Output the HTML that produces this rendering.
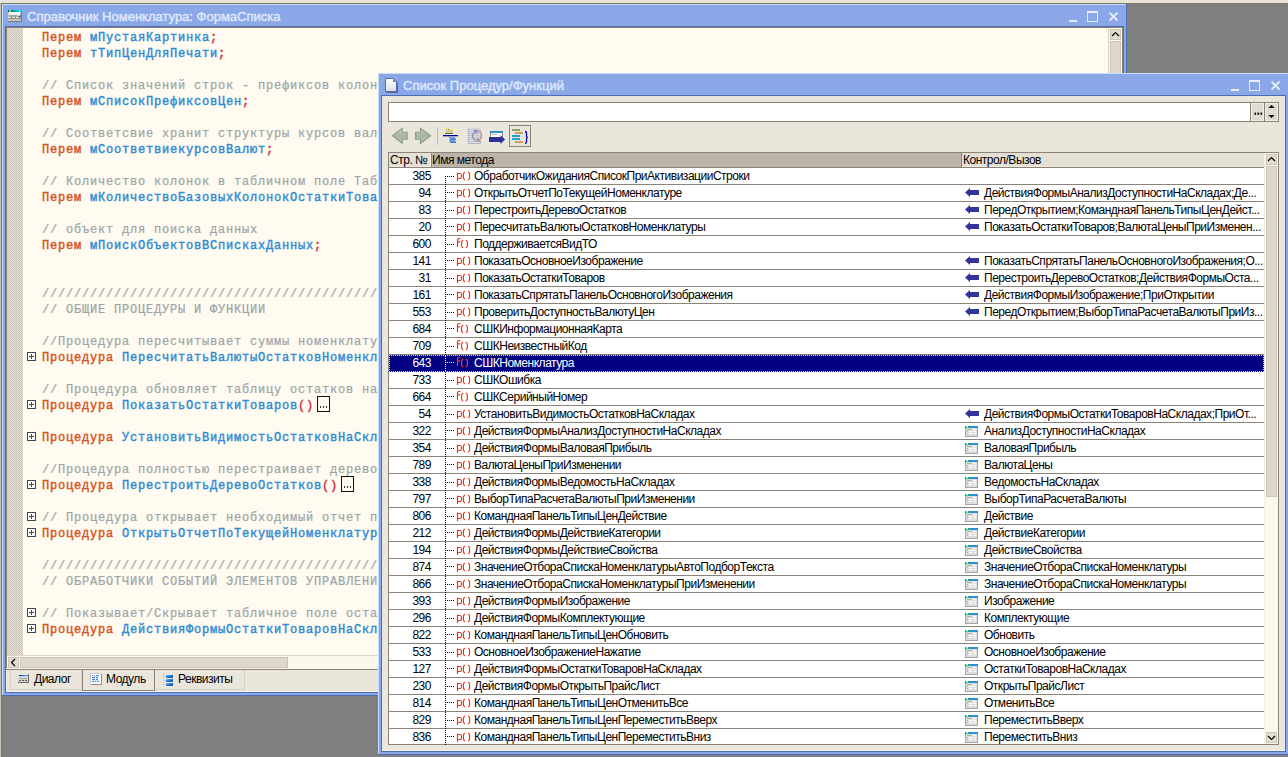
<!DOCTYPE html><html><head><meta charset="utf-8"><style>
*{margin:0;padding:0;box-sizing:border-box}
body{width:1288px;height:757px;background:#808080;position:relative;overflow:hidden;font-family:"Liberation Sans",sans-serif}
.a{position:absolute}
.t{position:absolute;white-space:pre;font-family:"Liberation Sans",sans-serif;font-size:12px;letter-spacing:-0.48px;line-height:14px;color:#000}
.c{position:absolute;white-space:pre;font-family:"Liberation Mono",monospace;font-weight:normal;-webkit-text-stroke:0.4px;font-size:12px;letter-spacing:0.8px;line-height:16px}
.kw{color:#d8501a}.id{color:#2a8ad6}.cm{color:#9aa4a8;-webkit-text-stroke:0.2px}.pu{color:#e02838}
.ttl{position:absolute;white-space:pre;font-family:"Liberation Sans",sans-serif;font-weight:normal;font-size:13px;-webkit-text-stroke:0.45px;line-height:15px;color:#dfe7fa}
</style></head><body>
<div class="a" style="left:0px;top:0px;width:1288px;height:3px;background:#e8e4d8"></div>
<div class="a" style="left:0px;top:3px;width:1288px;height:1px;background:#7c7868"></div>
<div class="a" style="left:0px;top:3px;width:1px;height:754px;background:#c8c4b4"></div>
<div class="a" style="left:1px;top:3px;width:1px;height:754px;background:#7c7868"></div>
<div class="a" style="left:2px;top:4px;width:1125px;height:692px;background:#8aa8e8"></div>
<div class="a" style="left:2px;top:4px;width:1125px;height:1px;background:#c6dcfc"></div>
<div class="a" style="left:2px;top:4px;width:1px;height:692px;background:#c6dcfc"></div>
<div class="a" style="left:1126px;top:4px;width:1px;height:692px;background:#4c6cb8"></div>
<div class="a" style="left:2px;top:695px;width:1125px;height:1px;background:#4c6cb8"></div>
<svg class="a" style="left:8px;top:10px" width="14" height="12" viewBox="0 0 14 12">
<defs><linearGradient id="tg" x1="0" y1="0" x2="1" y2="0"><stop offset="0" stop-color="#005868"/><stop offset="1" stop-color="#00ffff"/></linearGradient></defs>
<rect x="0" y="0" width="14" height="2" fill="url(#tg)"/><rect x="1" y="0.2" width="1.6" height="1.6" fill="#ffff00"/>
<rect x="0" y="2" width="13" height="9" fill="#c8c8c8"/><rect x="1" y="2" width="11" height="3" fill="#f6f6f6"/>
<rect x="1" y="5" width="8" height="2" fill="#a4a4a4"/><rect x="10" y="6" width="3" height="1" fill="#707070"/><rect x="12" y="5" width="1" height="1" fill="#707070"/>
<rect x="0" y="7" width="3" height="1" fill="#f0f0f0"/><rect x="4" y="7" width="3" height="1" fill="#f0f0f0"/><rect x="8" y="7" width="3" height="1" fill="#f0f0f0"/>
<rect x="3" y="7" width="1" height="2" fill="#707070"/><rect x="7" y="7" width="1" height="2" fill="#707070"/><rect x="11" y="7" width="1" height="2" fill="#707070"/><rect x="0" y="8" width="13" height="1" fill="#888"/>
<rect x="0" y="11" width="14" height="1" fill="#7a7a7a"/><rect x="13" y="1" width="1" height="11" fill="#7a7a7a"/></svg>
<div class="ttl" style="left:27px;top:9px">Справочник Номенклатура: ФормаСписка</div>
<svg class="a" style="left:1109px;top:12px" width="10" height="10" viewBox="0 0 10 10"><path d="M0.6 0.6L8.5 8.5M8.5 0.6L0.6 8.5" stroke="#e6edfc" stroke-width="1.9" stroke-linecap="butt"/></svg>
<div class="a" style="left:1087px;top:11px;width:11px;height:11px;border:1px solid #e6edfc;border-top-width:2px"></div>
<div class="a" style="left:1069px;top:20px;width:8px;height:2px;background:#e6edfc"></div>
<div class="a" style="left:5px;top:26px;width:1119px;height:667px;border:1px solid #4c6cb8"></div>
<div class="a" style="left:6px;top:27px;width:1117px;height:665px;background:#ebe6dc"></div>
<div class="a" style="left:6px;top:27px;width:1116px;height:1px;background:#8a8270"></div>
<div class="a" style="left:6px;top:27px;width:1px;height:642px;background:#8a8270"></div>
<div class="a" style="left:1122px;top:27px;width:1px;height:642px;background:#8a8270"></div>
<div class="a" style="left:7px;top:28px;width:16px;height:627px;background-color:#e6e0d6;background-image:linear-gradient(45deg,#cbc5b8 25%,transparent 25%,transparent 75%,#cbc5b8 75%),linear-gradient(45deg,#cbc5b8 25%,transparent 25%,transparent 75%,#cbc5b8 75%);background-size:2px 2px;background-position:0 0,1px 1px"></div>
<div class="a" style="left:23px;top:28px;width:1085px;height:627px;background:#fffbf0"></div>
<div class="c" style="left:42px;top:30px"><span class="kw">Перем</span> <span class="id">мПустаяКартинка</span><span class="pu">;</span></div>
<div class="c" style="left:42px;top:46px"><span class="kw">Перем</span> <span class="id">тТипЦенДляПечати</span><span class="pu">;</span></div>
<div class="c" style="left:42px;top:78px"><span class="cm">// Список значений строк - префиксов колонок</span></div>
<div class="c" style="left:42px;top:94px"><span class="kw">Перем</span> <span class="id">мСписокПрефиксовЦен</span><span class="pu">;</span></div>
<div class="c" style="left:42px;top:126px"><span class="cm">// Соответсвие хранит структуры курсов валют</span></div>
<div class="c" style="left:42px;top:142px"><span class="kw">Перем</span> <span class="id">мСоответвиекурсовВалют</span><span class="pu">;</span></div>
<div class="c" style="left:42px;top:174px"><span class="cm">// Количество колонок в табличном поле Таблица</span></div>
<div class="c" style="left:42px;top:190px"><span class="kw">Перем</span> <span class="id">мКоличествоБазовыхКолонокОстаткиТоваров</span><span class="pu">;</span></div>
<div class="c" style="left:42px;top:222px"><span class="cm">// объект для поиска данных</span></div>
<div class="c" style="left:42px;top:238px"><span class="kw">Перем</span> <span class="id">мПоискОбъектовВСпискахДанных</span><span class="pu">;</span></div>
<div class="c" style="left:42px;top:286px"><span class="cm">////////////////////////////////////////////////////////////</span></div>
<div class="c" style="left:42px;top:302px"><span class="cm">// ОБЩИЕ ПРОЦЕДУРЫ И ФУНКЦИИ</span></div>
<div class="c" style="left:42px;top:334px"><span class="cm">//Процедура пересчитывает суммы номенклатуры</span></div>
<svg class="a" style="left:27px;top:352px" width="9" height="9" viewBox="0 0 9 9"><rect x="0.5" y="0.5" width="8" height="8" fill="#fff" stroke="#404850"/><path d="M2 4.5H7M4.5 2V7" stroke="#404850"/></svg>
<div class="c" style="left:42px;top:350px"><span class="kw">Процедура</span> <span class="id">ПересчитатьВалютыОстатковНоменклатуры</span></div>
<div class="c" style="left:42px;top:382px"><span class="cm">// Процедура обновляет таблицу остатков на складах</span></div>
<svg class="a" style="left:27px;top:400px" width="9" height="9" viewBox="0 0 9 9"><rect x="0.5" y="0.5" width="8" height="8" fill="#fff" stroke="#404850"/><path d="M2 4.5H7M4.5 2V7" stroke="#404850"/></svg>
<div class="a" style="left:317px;top:396px;width:13px;height:16px;border:1.5px solid #101010;background:#fffbf0"><div class="a" style="left:1.5px;top:9px;width:9px;height:1.5px;background-image:linear-gradient(90deg,#303030 50%,transparent 50%);background-size:3px 2px"></div></div>
<div class="c" style="left:42px;top:398px"><span class="kw">Процедура</span> <span class="id">ПоказатьОстаткиТоваров</span><span class="pu">()</span></div>
<svg class="a" style="left:27px;top:432px" width="9" height="9" viewBox="0 0 9 9"><rect x="0.5" y="0.5" width="8" height="8" fill="#fff" stroke="#404850"/><path d="M2 4.5H7M4.5 2V7" stroke="#404850"/></svg>
<div class="c" style="left:42px;top:430px"><span class="kw">Процедура</span> <span class="id">УстановитьВидимостьОстатковНаСкладах</span></div>
<div class="c" style="left:42px;top:462px"><span class="cm">//Процедура полностью перестраивает дерево остатков</span></div>
<svg class="a" style="left:27px;top:480px" width="9" height="9" viewBox="0 0 9 9"><rect x="0.5" y="0.5" width="8" height="8" fill="#fff" stroke="#404850"/><path d="M2 4.5H7M4.5 2V7" stroke="#404850"/></svg>
<div class="a" style="left:341px;top:476px;width:13px;height:16px;border:1.5px solid #101010;background:#fffbf0"><div class="a" style="left:1.5px;top:9px;width:9px;height:1.5px;background-image:linear-gradient(90deg,#303030 50%,transparent 50%);background-size:3px 2px"></div></div>
<div class="c" style="left:42px;top:478px"><span class="kw">Процедура</span> <span class="id">ПерестроитьДеревоОстатков</span><span class="pu">()</span></div>
<svg class="a" style="left:27px;top:512px" width="9" height="9" viewBox="0 0 9 9"><rect x="0.5" y="0.5" width="8" height="8" fill="#fff" stroke="#404850"/><path d="M2 4.5H7M4.5 2V7" stroke="#404850"/></svg>
<div class="c" style="left:42px;top:510px"><span class="cm">// Процедура открывает необходимый отчет по номенклатуре</span></div>
<svg class="a" style="left:27px;top:528px" width="9" height="9" viewBox="0 0 9 9"><rect x="0.5" y="0.5" width="8" height="8" fill="#fff" stroke="#404850"/><path d="M2 4.5H7M4.5 2V7" stroke="#404850"/></svg>
<div class="c" style="left:42px;top:526px"><span class="kw">Процедура</span> <span class="id">ОткрытьОтчетПоТекущейНоменклатуре</span></div>
<div class="c" style="left:42px;top:558px"><span class="cm">////////////////////////////////////////////////////////////</span></div>
<div class="c" style="left:42px;top:574px"><span class="cm">// ОБРАБОТЧИКИ СОБЫТИЙ ЭЛЕМЕНТОВ УПРАВЛЕНИЯ</span></div>
<svg class="a" style="left:27px;top:608px" width="9" height="9" viewBox="0 0 9 9"><rect x="0.5" y="0.5" width="8" height="8" fill="#fff" stroke="#404850"/><path d="M2 4.5H7M4.5 2V7" stroke="#404850"/></svg>
<div class="c" style="left:42px;top:606px"><span class="cm">// Показывает/Скрывает табличное поле остатков</span></div>
<svg class="a" style="left:27px;top:624px" width="9" height="9" viewBox="0 0 9 9"><rect x="0.5" y="0.5" width="8" height="8" fill="#fff" stroke="#404850"/><path d="M2 4.5H7M4.5 2V7" stroke="#404850"/></svg>
<div class="c" style="left:42px;top:622px"><span class="kw">Процедура</span> <span class="id">ДействияФормыОстаткиТоваровНаСкладах</span></div>
<div class="a" style="left:1108px;top:28px;width:14px;height:627px;background:#fdf8ec"></div>
<div class="a" style="left:1108px;top:28px;width:1px;height:627px;background:#d8d2c4"></div>
<div class="a" style="left:1110px;top:29px;width:11px;height:11px;background:#e2ddd2;border:1px solid #cdc6b8"></div>
<svg class="a" style="left:1111px;top:31px" width="9" height="6" viewBox="0 0 9 6"><path d="M1 5L4.5 1.5L8 5" stroke="#000" stroke-width="1.2" fill="none"/></svg>
<div class="a" style="left:1110px;top:41px;width:11px;height:600px;background:#ddd7cc;border:1px solid #cdc6b8"></div>
<div class="a" style="left:7px;top:655px;width:1101px;height:1px;background:#dcd6c8"></div>
<div class="a" style="left:7px;top:656px;width:1101px;height:13px;background:#fdf8ec"></div>
<div class="a" style="left:8px;top:657px;width:11px;height:11px;background:#e2ddd2;border:1px solid #cdc6b8"></div>
<svg class="a" style="left:10px;top:658px" width="7" height="9" viewBox="0 0 7 9"><path d="M5 1L1.5 4.5L5 8" stroke="#000" stroke-width="1.2" fill="none"/></svg>
<div class="a" style="left:20px;top:657px;width:268px;height:11px;background:#ddd7cc;border:1px solid #cdc6b8"></div>
<div class="a" style="left:6px;top:668px;width:1116px;height:1px;background:#f8f4e8"></div>
<div class="a" style="left:6px;top:669px;width:1116px;height:1px;background:#8a8478"></div>
<div class="a" style="left:6px;top:691px;width:1116px;height:1px;background:#faf4e4"></div>
<div class="a" style="left:10px;top:670px;width:72px;height:20px;border:1px solid #d8d2c6;border-top:none"></div>
<svg class="a" style="left:18px;top:674px" width="11" height="9" viewBox="0 0 11 9"><defs><linearGradient id="dgr" x1="0" y1="0" x2="1" y2="0"><stop offset="0" stop-color="#18187a"/><stop offset="0.6" stop-color="#2878d0"/><stop offset="1" stop-color="#20d8e0"/></linearGradient></defs><rect x="0" y="0" width="11" height="9" fill="#d6d6d6"/><rect x="0" y="0" width="10" height="1" fill="#ececec"/><rect x="1" y="1" width="9" height="1" fill="url(#dgr)"/><rect x="2" y="4" width="7" height="1" fill="#a4a4a4"/><rect x="1" y="6" width="2" height="1" fill="#5c5c5c"/><rect x="4" y="6" width="2" height="1" fill="#5c5c5c"/><rect x="7" y="6" width="2" height="1" fill="#5c5c5c"/><rect x="0" y="8" width="11" height="1" fill="#6a6a6a"/><rect x="10" y="0" width="1" height="9" fill="#6a6a6a"/></svg>
<div class="t" style="left:34px;top:672px;font-size:12px">Диалог</div>
<div class="a" style="left:82px;top:670px;width:73px;height:21px;border-left:1px solid #8a8478;border-right:1px solid #8a8478;border-bottom:1px solid #8a8478"></div>
<svg class="a" style="left:90px;top:673px" width="12" height="12" viewBox="0 0 12 12"><rect x="0" y="0" width="11" height="11" fill="#c8c8d2"/><rect x="1" y="1" width="10" height="10" fill="#fff"/><rect x="11" y="1" width="1" height="11" fill="#8c8c8c"/><rect x="1" y="11" width="11" height="1" fill="#8c8c8c"/><rect x="2" y="2" width="1" height="1" fill="#7274d6"/><rect x="4" y="2" width="1" height="1" fill="#7274d6"/><rect x="6" y="2" width="3" height="1" fill="#7274d6"/><rect x="2" y="3" width="7" height="1" fill="#b4f2f4"/><rect x="2" y="4" width="3" height="1" fill="#7274d6"/><rect x="6" y="4" width="2" height="1" fill="#7274d6"/><rect x="2" y="5" width="7" height="1" fill="#b4f2f4"/><rect x="2" y="6" width="3" height="1" fill="#7274d6"/><rect x="6" y="6" width="2" height="1" fill="#7274d6"/><rect x="2" y="7" width="7" height="1" fill="#b4f2f4"/><rect x="2" y="8" width="2" height="1" fill="#7274d6"/><rect x="5" y="8" width="1" height="1" fill="#7274d6"/><rect x="7" y="8" width="2" height="1" fill="#7274d6"/></svg>
<div class="t" style="left:106px;top:672px">Модуль</div>
<div class="a" style="left:155px;top:670px;width:90px;height:20px;border:1px solid #d8d2c6;border-top:none;border-left:none"></div>
<svg class="a" style="left:163px;top:672px" width="11" height="15" viewBox="0 0 11 15"><defs><linearGradient id="rg" x1="0" y1="0" x2="1" y2="1"><stop offset="0" stop-color="#48d8d0"/><stop offset="0.5" stop-color="#3070e0"/><stop offset="1" stop-color="#104e98"/></linearGradient></defs><rect x="0" y="0" width="1" height="13" fill="#ccd0dc"/><rect x="0" y="4" width="3" height="1" fill="#ccd0dc"/><rect x="0" y="8" width="3" height="1" fill="#ccd0dc"/><rect x="0" y="12" width="3" height="1" fill="#ccd0dc"/><rect x="3" y="3" width="7" height="3" fill="url(#rg)"/><rect x="3" y="7" width="7" height="3" fill="url(#rg)"/><rect x="3" y="11" width="7" height="3" fill="url(#rg)"/></svg>
<div class="t" style="left:178px;top:672px">Реквизиты</div>
<div class="a" style="left:378px;top:73px;width:911px;height:682px;background:#8aa8e8"></div>
<div class="a" style="left:378px;top:73px;width:911px;height:1px;background:#c6dcfc"></div>
<div class="a" style="left:378px;top:73px;width:1px;height:682px;background:#c6dcfc"></div>
<div class="a" style="left:1288px;top:73px;width:1px;height:682px;background:#4c6cb8"></div>
<div class="a" style="left:378px;top:754px;width:911px;height:1px;background:#4c6cb8"></div>
<svg class="a" style="left:385px;top:78px" width="14" height="16" viewBox="0 0 14 16"><defs><linearGradient id="dg" x1="0" y1="0" x2="0" y2="1"><stop offset="0" stop-color="#fbfcfd"/><stop offset="0.5" stop-color="#eef2ee"/><stop offset="1" stop-color="#d4dce6"/></linearGradient></defs><path d="M1.5 1.5H9.5L13 5V15H1.5Z" fill="#5c6478"/><path d="M0.5 0.5H8L11.5 4V13.5H0.5Z" fill="url(#dg)" stroke="#4f6fb0"/><path d="M8 0.5V4H11.5Z" fill="#5a90d0"/></svg>
<div class="ttl" style="left:403px;top:78px">Список Процедур/Функций</div>
<svg class="a" style="left:1271px;top:81px" width="10" height="10" viewBox="0 0 10 10"><path d="M0.6 0.6L8.5 8.5M8.5 0.6L0.6 8.5" stroke="#e6edfc" stroke-width="1.9" stroke-linecap="butt"/></svg>
<div class="a" style="left:1249px;top:80px;width:11px;height:11px;border:1px solid #e6edfc;border-top-width:2px"></div>
<div class="a" style="left:1231px;top:89px;width:8px;height:2px;background:#e6edfc"></div>
<div class="a" style="left:381px;top:95px;width:905px;height:657px;border:1px solid #4c6cb8"></div>
<div class="a" style="left:382px;top:96px;width:903px;height:655px;background:#ebe6dc"></div>
<div class="a" style="left:382px;top:750px;width:903px;height:1px;background:#faf4e4"></div>
<div class="a" style="left:388px;top:102px;width:891px;height:20px;background:#fff;border:1px solid #8a8478"></div>
<div class="a" style="left:1250px;top:102px;width:1px;height:20px;background:#8a8478"></div>
<div class="a" style="left:1251px;top:103px;width:13px;height:18px;background:#e0dbd0;border:1px solid #f4f0e6"></div>
<svg class="a" style="left:1253px;top:112px" width="10" height="3" viewBox="0 0 10 3"><rect x="1.5" y="0.6" width="1.6" height="2.2" fill="#000"/><rect x="4.5" y="0.6" width="1.6" height="2.2" fill="#000"/><rect x="7.5" y="0.6" width="1.6" height="2.2" fill="#000"/></svg>
<div class="a" style="left:1264px;top:102px;width:1px;height:20px;background:#8a8478"></div>
<div class="a" style="left:1265px;top:103px;width:13px;height:18px;background:#e0dbd0;border:1px solid #f4f0e6"></div>
<svg class="a" style="left:1266px;top:104px" width="11" height="16" viewBox="0 0 11 16"><path d="M5.5 1L8.7 4H2.3Z" fill="#000"/><path d="M2.3 11H8.7L5.5 14Z" fill="#000"/></svg>
<svg class="a" style="left:390px;top:126px" width="45" height="20" viewBox="0 0 45 20">
<defs><linearGradient id="ag" x1="0" y1="0" x2="0" y2="1"><stop offset="0" stop-color="#c8d4c0"/><stop offset="0.5" stop-color="#aab4a2"/><stop offset="1" stop-color="#bcc8b4"/></linearGradient></defs>
<path d="M2.5 9.8L12.3 2.3V6.3H17.2V13.3H12.3V17.3Z" fill="url(#ag)" stroke="#8a9c86" stroke-width="1.1"/>
<path d="M40.5 9.8L30.5 2.3V6.3H25.6V13.3H30.5V17.3Z" fill="url(#ag)" stroke="#8a9c86" stroke-width="1.1"/></svg>
<div class="a" style="left:437px;top:127px;width:1px;height:18px;background:#c4bcae"></div>
<svg class="a" style="left:442px;top:127px" width="18" height="18" viewBox="0 0 18 18">
<rect x="3" y="2" width="8" height="4" fill="#d2ce92"/><rect x="3" y="1" width="3" height="1" fill="#f6f040"/><rect x="6" y="2" width="5" height="1" fill="#f6f040"/><rect x="3" y="2" width="1" height="4" fill="#eeeaa8"/><rect x="6" y="2" width="1" height="1" fill="#707050"/><rect x="3" y="6" width="8" height="1" fill="#6c6a3a"/>
<rect x="1" y="8" width="15" height="1.3" fill="#0000a0"/>
<rect x="7" y="10" width="6" height="1.6" fill="#68a6fc"/><rect x="8" y="11.5" width="6" height="1.3" fill="#2462aa"/><rect x="7" y="13" width="6" height="1.6" fill="#68a6fc"/><rect x="8" y="14.5" width="6" height="1.3" fill="#2462aa"/></svg>
<svg class="a" style="left:467px;top:128px" width="16" height="16" viewBox="0 0 16 16">
<rect x="1" y="15" width="12" height="1" fill="#b8b8c0"/><rect x="13" y="1" width="1" height="15" fill="#c4c4cc"/>
<rect x="0" y="0" width="13" height="15" fill="#d8d8dc"/>
<rect x="1" y="1" width="2" height="1" fill="#9cb4c8"/><rect x="4" y="1" width="8" height="1" fill="#cacace"/><rect x="1" y="3" width="2" height="1" fill="#9cb4c8"/><rect x="4" y="3" width="8" height="1" fill="#cacace"/><rect x="1" y="5" width="2" height="1" fill="#9cb4c8"/><rect x="4" y="5" width="8" height="1" fill="#cacace"/><rect x="1" y="7" width="2" height="1" fill="#9cb4c8"/><rect x="4" y="7" width="8" height="1" fill="#cacace"/><rect x="1" y="9" width="2" height="1" fill="#9cb4c8"/><rect x="4" y="9" width="8" height="1" fill="#cacace"/><rect x="1" y="11" width="2" height="1" fill="#9cb4c8"/><rect x="4" y="11" width="8" height="1" fill="#cacace"/><rect x="1" y="13" width="2" height="1" fill="#9cb4c8"/><rect x="4" y="13" width="8" height="1" fill="#cacace"/>
<path d="M9.5 13.5L5.5 9.5V6.5L9 3" stroke="#8a8ac4" stroke-width="1.2" fill="none"/><path d="M6 2H10.5V6.5Z" fill="#8a8ac4"/>
<path d="M11 2L14.5 5.5V9.5L11 13" stroke="#c09494" stroke-width="1.2" fill="none"/><path d="M10 9V14H14.5Z" fill="#c09494"/></svg>
<svg class="a" style="left:489px;top:130px" width="17" height="15" viewBox="0 0 17 15">
<rect x="1" y="1" width="13" height="7" fill="#909090"/><rect x="2" y="3" width="11" height="4" fill="#fff"/><rect x="3" y="4" width="5" height="1" fill="#b0b0b0"/><rect x="1" y="1" width="13" height="2" fill="#2a94d4"/><rect x="1" y="1" width="1" height="2" fill="#3070c0"/><rect x="2" y="2" width="1.5" height="1.5" fill="#20e020"/>
<path d="M0 7H11.5V5L16 9.5L11.5 14V12H0Z" fill="#30309a"/></svg>
<div class="a" style="left:509px;top:125px;width:22px;height:22px;border:1px solid #8a8478"></div>
<svg class="a" style="left:511px;top:128px" width="20" height="18" viewBox="0 0 20 18">
<rect x="1" y="1" width="8" height="2" fill="#909a70"/><rect x="4" y="4" width="8" height="2" fill="#d09a60"/><rect x="1" y="7" width="8" height="2" fill="#20a0d8"/><rect x="1" y="10" width="8" height="2" fill="#20a0d8"/><rect x="4" y="13" width="8" height="2" fill="#d09a60"/>
<path d="M14 3.5Q15.5 3.5 15.5 5V8Q15.5 9.4 16.8 9.4Q15.5 9.4 15.5 11V14Q15.5 15.4 14 15.4" stroke="#0000a8" stroke-width="1.3" fill="none"/></svg>
<div class="a" style="left:388px;top:152px;width:891px;height:593px;background:#fff;border:1px solid #8a8478"></div>
<div class="a" style="left:389px;top:153px;width:42px;height:14px;background:#e5e0d6;border-right:1px solid #f2eee6;border-bottom:1px solid #efeae2"></div>
<div class="a" style="left:431px;top:153px;width:1px;height:14px;background:#8a8478"></div>
<div class="a" style="left:432px;top:153px;width:529px;height:14px;background:#bcb4a8;border-left:1px solid #ccc5b9"></div>
<div class="a" style="left:961px;top:153px;width:1px;height:14px;background:#8a8478"></div>
<div class="a" style="left:962px;top:153px;width:302px;height:14px;background:#e5e0d6;border-bottom:1px solid #efeae2"></div>
<div class="a" style="left:389px;top:167px;width:875px;height:1px;background:#8a8478"></div>
<div class="t" style="left:390px;top:153px">Стр. №</div>
<div class="t" style="left:432px;top:153px">Имя метода</div>
<div class="t" style="left:963px;top:153px">Контрол/Вызов</div>
<div class="a" style="left:389px;top:184px;width:875px;height:1px;background:#8a8478"></div>
<div class="t" style="left:389px;top:169px;width:42px;text-align:right;color:#000">385</div>
<div class="a" style="left:445px;top:176px;width:10px;height:1px;background-image:linear-gradient(90deg,#000 50%,transparent 50%);background-size:2px 1px"></div>
<svg class="a" style="left:456px;top:169px" width="16" height="14" viewBox="0 0 16 14"><path d="M1.5 4V11.5M1.5 4.5H4Q5.5 4.5 5.5 6.5V7.5Q5.5 9.5 4 9.5H1.5M8.5 3.3Q7.4 4 7.4 6V8Q7.4 10 8.5 10.7M12.5 3.3Q13.6 4 13.6 6V8Q13.6 10 12.5 10.7" stroke="#e8301a" stroke-width="1.15" fill="none" stroke-linecap="round"/></svg>
<div class="t" style="left:474px;top:169px;color:#000">ОбработчикОжиданияСписокПриАктивизацииСтроки</div>
<div class="a" style="left:389px;top:201px;width:875px;height:1px;background:#8a8478"></div>
<div class="t" style="left:389px;top:186px;width:42px;text-align:right;color:#000">94</div>
<div class="a" style="left:445px;top:192px;width:10px;height:1px;background-image:linear-gradient(90deg,#000 50%,transparent 50%);background-size:2px 1px"></div>
<svg class="a" style="left:456px;top:186px" width="16" height="14" viewBox="0 0 16 14"><path d="M1.5 4V11.5M1.5 4.5H4Q5.5 4.5 5.5 6.5V7.5Q5.5 9.5 4 9.5H1.5M8.5 3.3Q7.4 4 7.4 6V8Q7.4 10 8.5 10.7M12.5 3.3Q13.6 4 13.6 6V8Q13.6 10 12.5 10.7" stroke="#e8301a" stroke-width="1.15" fill="none" stroke-linecap="round"/></svg>
<div class="t" style="left:474px;top:186px;color:#000">ОткрытьОтчетПоТекущейНоменклатуре</div>
<svg class="a" style="left:965px;top:188px" width="15" height="10" viewBox="0 0 15 10"><path d="M0 4.5L5 0V2H14V7H5V9Z" fill="#33339a"/></svg>
<div class="t" style="left:984px;top:186px;color:#000">ДействияФормыАнализДоступностиНаСкладах;Де...</div>
<div class="a" style="left:389px;top:218px;width:875px;height:1px;background:#8a8478"></div>
<div class="t" style="left:389px;top:203px;width:42px;text-align:right;color:#000">83</div>
<div class="a" style="left:445px;top:210px;width:10px;height:1px;background-image:linear-gradient(90deg,#000 50%,transparent 50%);background-size:2px 1px"></div>
<svg class="a" style="left:456px;top:203px" width="16" height="14" viewBox="0 0 16 14"><path d="M1.5 4V11.5M1.5 4.5H4Q5.5 4.5 5.5 6.5V7.5Q5.5 9.5 4 9.5H1.5M8.5 3.3Q7.4 4 7.4 6V8Q7.4 10 8.5 10.7M12.5 3.3Q13.6 4 13.6 6V8Q13.6 10 12.5 10.7" stroke="#e8301a" stroke-width="1.15" fill="none" stroke-linecap="round"/></svg>
<div class="t" style="left:474px;top:203px;color:#000">ПерестроитьДеревоОстатков</div>
<svg class="a" style="left:965px;top:205px" width="15" height="10" viewBox="0 0 15 10"><path d="M0 4.5L5 0V2H14V7H5V9Z" fill="#33339a"/></svg>
<div class="t" style="left:984px;top:203px;color:#000">ПередОткрытием;КоманднаяПанельТипыЦенДейст...</div>
<div class="a" style="left:389px;top:235px;width:875px;height:1px;background:#8a8478"></div>
<div class="t" style="left:389px;top:220px;width:42px;text-align:right;color:#000">20</div>
<div class="a" style="left:445px;top:226px;width:10px;height:1px;background-image:linear-gradient(90deg,#000 50%,transparent 50%);background-size:2px 1px"></div>
<svg class="a" style="left:456px;top:220px" width="16" height="14" viewBox="0 0 16 14"><path d="M1.5 4V11.5M1.5 4.5H4Q5.5 4.5 5.5 6.5V7.5Q5.5 9.5 4 9.5H1.5M8.5 3.3Q7.4 4 7.4 6V8Q7.4 10 8.5 10.7M12.5 3.3Q13.6 4 13.6 6V8Q13.6 10 12.5 10.7" stroke="#e8301a" stroke-width="1.15" fill="none" stroke-linecap="round"/></svg>
<div class="t" style="left:474px;top:220px;color:#000">ПересчитатьВалютыОстатковНоменклатуры</div>
<svg class="a" style="left:965px;top:222px" width="15" height="10" viewBox="0 0 15 10"><path d="M0 4.5L5 0V2H14V7H5V9Z" fill="#33339a"/></svg>
<div class="t" style="left:984px;top:220px;color:#000">ПоказатьОстаткиТоваров;ВалютаЦеныПриИзменен...</div>
<div class="a" style="left:389px;top:252px;width:875px;height:1px;background:#8a8478"></div>
<div class="t" style="left:389px;top:237px;width:42px;text-align:right;color:#000">600</div>
<div class="a" style="left:445px;top:244px;width:10px;height:1px;background-image:linear-gradient(90deg,#000 50%,transparent 50%);background-size:2px 1px"></div>
<svg class="a" style="left:456px;top:237px" width="16" height="14" viewBox="0 0 16 14"><path d="M1.5 9.5V3Q1.5 1.5 3 1.5H4M1.5 4.8H3.7M6.8 3.3Q5.6 4 5.6 6V8Q5.6 10 6.8 10.7M10.2 3.3Q11.4 4 11.4 6V8Q11.4 10 10.2 10.7" stroke="#e8301a" stroke-width="1.15" fill="none" stroke-linecap="round"/></svg>
<div class="t" style="left:474px;top:237px;color:#000">ПоддерживаетсяВидТО</div>
<div class="a" style="left:389px;top:269px;width:875px;height:1px;background:#8a8478"></div>
<div class="t" style="left:389px;top:254px;width:42px;text-align:right;color:#000">141</div>
<div class="a" style="left:445px;top:260px;width:10px;height:1px;background-image:linear-gradient(90deg,#000 50%,transparent 50%);background-size:2px 1px"></div>
<svg class="a" style="left:456px;top:254px" width="16" height="14" viewBox="0 0 16 14"><path d="M1.5 4V11.5M1.5 4.5H4Q5.5 4.5 5.5 6.5V7.5Q5.5 9.5 4 9.5H1.5M8.5 3.3Q7.4 4 7.4 6V8Q7.4 10 8.5 10.7M12.5 3.3Q13.6 4 13.6 6V8Q13.6 10 12.5 10.7" stroke="#e8301a" stroke-width="1.15" fill="none" stroke-linecap="round"/></svg>
<div class="t" style="left:474px;top:254px;color:#000">ПоказатьОсновноеИзображение</div>
<svg class="a" style="left:965px;top:256px" width="15" height="10" viewBox="0 0 15 10"><path d="M0 4.5L5 0V2H14V7H5V9Z" fill="#33339a"/></svg>
<div class="t" style="left:984px;top:254px;color:#000">ПоказатьСпрятатьПанельОсновногоИзображения;О...</div>
<div class="a" style="left:389px;top:286px;width:875px;height:1px;background:#8a8478"></div>
<div class="t" style="left:389px;top:271px;width:42px;text-align:right;color:#000">31</div>
<div class="a" style="left:445px;top:278px;width:10px;height:1px;background-image:linear-gradient(90deg,#000 50%,transparent 50%);background-size:2px 1px"></div>
<svg class="a" style="left:456px;top:271px" width="16" height="14" viewBox="0 0 16 14"><path d="M1.5 4V11.5M1.5 4.5H4Q5.5 4.5 5.5 6.5V7.5Q5.5 9.5 4 9.5H1.5M8.5 3.3Q7.4 4 7.4 6V8Q7.4 10 8.5 10.7M12.5 3.3Q13.6 4 13.6 6V8Q13.6 10 12.5 10.7" stroke="#e8301a" stroke-width="1.15" fill="none" stroke-linecap="round"/></svg>
<div class="t" style="left:474px;top:271px;color:#000">ПоказатьОстаткиТоваров</div>
<svg class="a" style="left:965px;top:273px" width="15" height="10" viewBox="0 0 15 10"><path d="M0 4.5L5 0V2H14V7H5V9Z" fill="#33339a"/></svg>
<div class="t" style="left:984px;top:271px;color:#000">ПерестроитьДеревоОстатков;ДействияФормыОста...</div>
<div class="a" style="left:389px;top:303px;width:875px;height:1px;background:#8a8478"></div>
<div class="t" style="left:389px;top:288px;width:42px;text-align:right;color:#000">161</div>
<div class="a" style="left:445px;top:294px;width:10px;height:1px;background-image:linear-gradient(90deg,#000 50%,transparent 50%);background-size:2px 1px"></div>
<svg class="a" style="left:456px;top:288px" width="16" height="14" viewBox="0 0 16 14"><path d="M1.5 4V11.5M1.5 4.5H4Q5.5 4.5 5.5 6.5V7.5Q5.5 9.5 4 9.5H1.5M8.5 3.3Q7.4 4 7.4 6V8Q7.4 10 8.5 10.7M12.5 3.3Q13.6 4 13.6 6V8Q13.6 10 12.5 10.7" stroke="#e8301a" stroke-width="1.15" fill="none" stroke-linecap="round"/></svg>
<div class="t" style="left:474px;top:288px;color:#000">ПоказатьСпрятатьПанельОсновногоИзображения</div>
<svg class="a" style="left:965px;top:290px" width="15" height="10" viewBox="0 0 15 10"><path d="M0 4.5L5 0V2H14V7H5V9Z" fill="#33339a"/></svg>
<div class="t" style="left:984px;top:288px;color:#000">ДействияФормыИзображение;ПриОткрытии</div>
<div class="a" style="left:389px;top:320px;width:875px;height:1px;background:#8a8478"></div>
<div class="t" style="left:389px;top:305px;width:42px;text-align:right;color:#000">553</div>
<div class="a" style="left:445px;top:312px;width:10px;height:1px;background-image:linear-gradient(90deg,#000 50%,transparent 50%);background-size:2px 1px"></div>
<svg class="a" style="left:456px;top:305px" width="16" height="14" viewBox="0 0 16 14"><path d="M1.5 4V11.5M1.5 4.5H4Q5.5 4.5 5.5 6.5V7.5Q5.5 9.5 4 9.5H1.5M8.5 3.3Q7.4 4 7.4 6V8Q7.4 10 8.5 10.7M12.5 3.3Q13.6 4 13.6 6V8Q13.6 10 12.5 10.7" stroke="#e8301a" stroke-width="1.15" fill="none" stroke-linecap="round"/></svg>
<div class="t" style="left:474px;top:305px;color:#000">ПроверитьДоступностьВалютуЦен</div>
<svg class="a" style="left:965px;top:307px" width="15" height="10" viewBox="0 0 15 10"><path d="M0 4.5L5 0V2H14V7H5V9Z" fill="#33339a"/></svg>
<div class="t" style="left:984px;top:305px;color:#000">ПередОткрытием;ВыборТипаРасчетаВалютыПриИз...</div>
<div class="a" style="left:389px;top:337px;width:875px;height:1px;background:#8a8478"></div>
<div class="t" style="left:389px;top:322px;width:42px;text-align:right;color:#000">684</div>
<div class="a" style="left:445px;top:328px;width:10px;height:1px;background-image:linear-gradient(90deg,#000 50%,transparent 50%);background-size:2px 1px"></div>
<svg class="a" style="left:456px;top:322px" width="16" height="14" viewBox="0 0 16 14"><path d="M1.5 9.5V3Q1.5 1.5 3 1.5H4M1.5 4.8H3.7M6.8 3.3Q5.6 4 5.6 6V8Q5.6 10 6.8 10.7M10.2 3.3Q11.4 4 11.4 6V8Q11.4 10 10.2 10.7" stroke="#e8301a" stroke-width="1.15" fill="none" stroke-linecap="round"/></svg>
<div class="t" style="left:474px;top:322px;color:#000">СШКИнформационнаяКарта</div>
<div class="a" style="left:389px;top:354px;width:875px;height:1px;background:#8a8478"></div>
<div class="t" style="left:389px;top:339px;width:42px;text-align:right;color:#000">709</div>
<div class="a" style="left:445px;top:346px;width:10px;height:1px;background-image:linear-gradient(90deg,#000 50%,transparent 50%);background-size:2px 1px"></div>
<svg class="a" style="left:456px;top:339px" width="16" height="14" viewBox="0 0 16 14"><path d="M1.5 9.5V3Q1.5 1.5 3 1.5H4M1.5 4.8H3.7M6.8 3.3Q5.6 4 5.6 6V8Q5.6 10 6.8 10.7M10.2 3.3Q11.4 4 11.4 6V8Q11.4 10 10.2 10.7" stroke="#e8301a" stroke-width="1.15" fill="none" stroke-linecap="round"/></svg>
<div class="t" style="left:474px;top:339px;color:#000">СШКНеизвестныйКод</div>
<div class="a" style="left:389px;top:355px;width:875px;height:17px;background:#000080"></div>
<div class="t" style="left:389px;top:356px;width:42px;text-align:right;color:#fff">643</div>
<div class="a" style="left:445px;top:362px;width:10px;height:1px;background-image:linear-gradient(90deg,#fff 50%,transparent 50%);background-size:2px 1px"></div>
<div class="a" style="left:445px;top:356px;width:1px;height:16px;background-image:linear-gradient(180deg,#fff 50%,transparent 50%);background-size:1px 2px;z-index:2"></div>
<svg class="a" style="left:456px;top:356px" width="16" height="14" viewBox="0 0 16 14"><path d="M1.5 9.5V3Q1.5 1.5 3 1.5H4M1.5 4.8H3.7M6.8 3.3Q5.6 4 5.6 6V8Q5.6 10 6.8 10.7M10.2 3.3Q11.4 4 11.4 6V8Q11.4 10 10.2 10.7" stroke="#ff3a2a" stroke-width="1.15" fill="none" stroke-linecap="round"/></svg>
<div class="t" style="left:474px;top:356px;color:#fff">СШКНоменклатура</div>
<div class="a" style="left:389px;top:388px;width:875px;height:1px;background:#8a8478"></div>
<div class="t" style="left:389px;top:373px;width:42px;text-align:right;color:#000">733</div>
<div class="a" style="left:445px;top:380px;width:10px;height:1px;background-image:linear-gradient(90deg,#000 50%,transparent 50%);background-size:2px 1px"></div>
<svg class="a" style="left:456px;top:373px" width="16" height="14" viewBox="0 0 16 14"><path d="M1.5 4V11.5M1.5 4.5H4Q5.5 4.5 5.5 6.5V7.5Q5.5 9.5 4 9.5H1.5M8.5 3.3Q7.4 4 7.4 6V8Q7.4 10 8.5 10.7M12.5 3.3Q13.6 4 13.6 6V8Q13.6 10 12.5 10.7" stroke="#e8301a" stroke-width="1.15" fill="none" stroke-linecap="round"/></svg>
<div class="t" style="left:474px;top:373px;color:#000">СШКОшибка</div>
<div class="a" style="left:389px;top:405px;width:875px;height:1px;background:#8a8478"></div>
<div class="t" style="left:389px;top:390px;width:42px;text-align:right;color:#000">664</div>
<div class="a" style="left:445px;top:396px;width:10px;height:1px;background-image:linear-gradient(90deg,#000 50%,transparent 50%);background-size:2px 1px"></div>
<svg class="a" style="left:456px;top:390px" width="16" height="14" viewBox="0 0 16 14"><path d="M1.5 9.5V3Q1.5 1.5 3 1.5H4M1.5 4.8H3.7M6.8 3.3Q5.6 4 5.6 6V8Q5.6 10 6.8 10.7M10.2 3.3Q11.4 4 11.4 6V8Q11.4 10 10.2 10.7" stroke="#e8301a" stroke-width="1.15" fill="none" stroke-linecap="round"/></svg>
<div class="t" style="left:474px;top:390px;color:#000">СШКСерийныйНомер</div>
<div class="a" style="left:389px;top:422px;width:875px;height:1px;background:#8a8478"></div>
<div class="t" style="left:389px;top:407px;width:42px;text-align:right;color:#000">54</div>
<div class="a" style="left:445px;top:414px;width:10px;height:1px;background-image:linear-gradient(90deg,#000 50%,transparent 50%);background-size:2px 1px"></div>
<svg class="a" style="left:456px;top:407px" width="16" height="14" viewBox="0 0 16 14"><path d="M1.5 4V11.5M1.5 4.5H4Q5.5 4.5 5.5 6.5V7.5Q5.5 9.5 4 9.5H1.5M8.5 3.3Q7.4 4 7.4 6V8Q7.4 10 8.5 10.7M12.5 3.3Q13.6 4 13.6 6V8Q13.6 10 12.5 10.7" stroke="#e8301a" stroke-width="1.15" fill="none" stroke-linecap="round"/></svg>
<div class="t" style="left:474px;top:407px;color:#000">УстановитьВидимостьОстатковНаСкладах</div>
<svg class="a" style="left:965px;top:409px" width="15" height="10" viewBox="0 0 15 10"><path d="M0 4.5L5 0V2H14V7H5V9Z" fill="#33339a"/></svg>
<div class="t" style="left:984px;top:407px;color:#000">ДействияФормыОстаткиТоваровНаСкладах;ПриОт...</div>
<div class="a" style="left:389px;top:439px;width:875px;height:1px;background:#8a8478"></div>
<div class="t" style="left:389px;top:424px;width:42px;text-align:right;color:#000">322</div>
<div class="a" style="left:445px;top:430px;width:10px;height:1px;background-image:linear-gradient(90deg,#000 50%,transparent 50%);background-size:2px 1px"></div>
<svg class="a" style="left:456px;top:424px" width="16" height="14" viewBox="0 0 16 14"><path d="M1.5 4V11.5M1.5 4.5H4Q5.5 4.5 5.5 6.5V7.5Q5.5 9.5 4 9.5H1.5M8.5 3.3Q7.4 4 7.4 6V8Q7.4 10 8.5 10.7M12.5 3.3Q13.6 4 13.6 6V8Q13.6 10 12.5 10.7" stroke="#e8301a" stroke-width="1.15" fill="none" stroke-linecap="round"/></svg>
<div class="t" style="left:474px;top:424px;color:#000">ДействияФормыАнализДоступностиНаСкладах</div>
<svg class="a" style="left:965px;top:426px" width="13" height="11" viewBox="0 0 13 11"><rect x="0" y="0" width="13" height="11" fill="#a4a4a4"/><rect x="1" y="2" width="11" height="8" fill="#dedede"/><rect x="0" y="0" width="13" height="2" fill="#fff"/><rect x="3" y="0" width="10" height="2" fill="#2a92d2"/><rect x="0" y="0" width="1" height="2" fill="#3a7cc0"/><rect x="1" y="0.6" width="1.6" height="1.6" fill="#22dd22"/><rect x="2" y="3" width="5" height="1" fill="#b0b0b0"/><rect x="8" y="3" width="3" height="1" fill="#fff"/><rect x="2" y="5" width="1" height="1" fill="#a8a8a8"/><rect x="4" y="5" width="3" height="1" fill="#fff"/><rect x="8" y="5" width="3" height="1" fill="#fff"/><rect x="2" y="7" width="1" height="1" fill="#a8a8a8"/><rect x="4" y="7" width="3" height="1" fill="#fff"/><rect x="9" y="7" width="2" height="1" fill="#fff"/></svg>
<div class="t" style="left:984px;top:424px;color:#000">АнализДоступностиНаСкладах</div>
<div class="a" style="left:389px;top:456px;width:875px;height:1px;background:#8a8478"></div>
<div class="t" style="left:389px;top:441px;width:42px;text-align:right;color:#000">354</div>
<div class="a" style="left:445px;top:448px;width:10px;height:1px;background-image:linear-gradient(90deg,#000 50%,transparent 50%);background-size:2px 1px"></div>
<svg class="a" style="left:456px;top:441px" width="16" height="14" viewBox="0 0 16 14"><path d="M1.5 4V11.5M1.5 4.5H4Q5.5 4.5 5.5 6.5V7.5Q5.5 9.5 4 9.5H1.5M8.5 3.3Q7.4 4 7.4 6V8Q7.4 10 8.5 10.7M12.5 3.3Q13.6 4 13.6 6V8Q13.6 10 12.5 10.7" stroke="#e8301a" stroke-width="1.15" fill="none" stroke-linecap="round"/></svg>
<div class="t" style="left:474px;top:441px;color:#000">ДействияФормыВаловаяПрибыль</div>
<svg class="a" style="left:965px;top:443px" width="13" height="11" viewBox="0 0 13 11"><rect x="0" y="0" width="13" height="11" fill="#a4a4a4"/><rect x="1" y="2" width="11" height="8" fill="#dedede"/><rect x="0" y="0" width="13" height="2" fill="#fff"/><rect x="3" y="0" width="10" height="2" fill="#2a92d2"/><rect x="0" y="0" width="1" height="2" fill="#3a7cc0"/><rect x="1" y="0.6" width="1.6" height="1.6" fill="#22dd22"/><rect x="2" y="3" width="5" height="1" fill="#b0b0b0"/><rect x="8" y="3" width="3" height="1" fill="#fff"/><rect x="2" y="5" width="1" height="1" fill="#a8a8a8"/><rect x="4" y="5" width="3" height="1" fill="#fff"/><rect x="8" y="5" width="3" height="1" fill="#fff"/><rect x="2" y="7" width="1" height="1" fill="#a8a8a8"/><rect x="4" y="7" width="3" height="1" fill="#fff"/><rect x="9" y="7" width="2" height="1" fill="#fff"/></svg>
<div class="t" style="left:984px;top:441px;color:#000">ВаловаяПрибыль</div>
<div class="a" style="left:389px;top:473px;width:875px;height:1px;background:#8a8478"></div>
<div class="t" style="left:389px;top:458px;width:42px;text-align:right;color:#000">789</div>
<div class="a" style="left:445px;top:464px;width:10px;height:1px;background-image:linear-gradient(90deg,#000 50%,transparent 50%);background-size:2px 1px"></div>
<svg class="a" style="left:456px;top:458px" width="16" height="14" viewBox="0 0 16 14"><path d="M1.5 4V11.5M1.5 4.5H4Q5.5 4.5 5.5 6.5V7.5Q5.5 9.5 4 9.5H1.5M8.5 3.3Q7.4 4 7.4 6V8Q7.4 10 8.5 10.7M12.5 3.3Q13.6 4 13.6 6V8Q13.6 10 12.5 10.7" stroke="#e8301a" stroke-width="1.15" fill="none" stroke-linecap="round"/></svg>
<div class="t" style="left:474px;top:458px;color:#000">ВалютаЦеныПриИзменении</div>
<svg class="a" style="left:965px;top:460px" width="13" height="11" viewBox="0 0 13 11"><rect x="0" y="0" width="13" height="11" fill="#a4a4a4"/><rect x="1" y="2" width="11" height="8" fill="#dedede"/><rect x="0" y="0" width="13" height="2" fill="#fff"/><rect x="3" y="0" width="10" height="2" fill="#2a92d2"/><rect x="0" y="0" width="1" height="2" fill="#3a7cc0"/><rect x="1" y="0.6" width="1.6" height="1.6" fill="#22dd22"/><rect x="2" y="3" width="5" height="1" fill="#b0b0b0"/><rect x="8" y="3" width="3" height="1" fill="#fff"/><rect x="2" y="5" width="1" height="1" fill="#a8a8a8"/><rect x="4" y="5" width="3" height="1" fill="#fff"/><rect x="8" y="5" width="3" height="1" fill="#fff"/><rect x="2" y="7" width="1" height="1" fill="#a8a8a8"/><rect x="4" y="7" width="3" height="1" fill="#fff"/><rect x="9" y="7" width="2" height="1" fill="#fff"/></svg>
<div class="t" style="left:984px;top:458px;color:#000">ВалютаЦены</div>
<div class="a" style="left:389px;top:490px;width:875px;height:1px;background:#8a8478"></div>
<div class="t" style="left:389px;top:475px;width:42px;text-align:right;color:#000">338</div>
<div class="a" style="left:445px;top:482px;width:10px;height:1px;background-image:linear-gradient(90deg,#000 50%,transparent 50%);background-size:2px 1px"></div>
<svg class="a" style="left:456px;top:475px" width="16" height="14" viewBox="0 0 16 14"><path d="M1.5 4V11.5M1.5 4.5H4Q5.5 4.5 5.5 6.5V7.5Q5.5 9.5 4 9.5H1.5M8.5 3.3Q7.4 4 7.4 6V8Q7.4 10 8.5 10.7M12.5 3.3Q13.6 4 13.6 6V8Q13.6 10 12.5 10.7" stroke="#e8301a" stroke-width="1.15" fill="none" stroke-linecap="round"/></svg>
<div class="t" style="left:474px;top:475px;color:#000">ДействияФормыВедомостьНаСкладах</div>
<svg class="a" style="left:965px;top:477px" width="13" height="11" viewBox="0 0 13 11"><rect x="0" y="0" width="13" height="11" fill="#a4a4a4"/><rect x="1" y="2" width="11" height="8" fill="#dedede"/><rect x="0" y="0" width="13" height="2" fill="#fff"/><rect x="3" y="0" width="10" height="2" fill="#2a92d2"/><rect x="0" y="0" width="1" height="2" fill="#3a7cc0"/><rect x="1" y="0.6" width="1.6" height="1.6" fill="#22dd22"/><rect x="2" y="3" width="5" height="1" fill="#b0b0b0"/><rect x="8" y="3" width="3" height="1" fill="#fff"/><rect x="2" y="5" width="1" height="1" fill="#a8a8a8"/><rect x="4" y="5" width="3" height="1" fill="#fff"/><rect x="8" y="5" width="3" height="1" fill="#fff"/><rect x="2" y="7" width="1" height="1" fill="#a8a8a8"/><rect x="4" y="7" width="3" height="1" fill="#fff"/><rect x="9" y="7" width="2" height="1" fill="#fff"/></svg>
<div class="t" style="left:984px;top:475px;color:#000">ВедомостьНаСкладах</div>
<div class="a" style="left:389px;top:507px;width:875px;height:1px;background:#8a8478"></div>
<div class="t" style="left:389px;top:492px;width:42px;text-align:right;color:#000">797</div>
<div class="a" style="left:445px;top:498px;width:10px;height:1px;background-image:linear-gradient(90deg,#000 50%,transparent 50%);background-size:2px 1px"></div>
<svg class="a" style="left:456px;top:492px" width="16" height="14" viewBox="0 0 16 14"><path d="M1.5 4V11.5M1.5 4.5H4Q5.5 4.5 5.5 6.5V7.5Q5.5 9.5 4 9.5H1.5M8.5 3.3Q7.4 4 7.4 6V8Q7.4 10 8.5 10.7M12.5 3.3Q13.6 4 13.6 6V8Q13.6 10 12.5 10.7" stroke="#e8301a" stroke-width="1.15" fill="none" stroke-linecap="round"/></svg>
<div class="t" style="left:474px;top:492px;color:#000">ВыборТипаРасчетаВалютыПриИзменении</div>
<svg class="a" style="left:965px;top:494px" width="13" height="11" viewBox="0 0 13 11"><rect x="0" y="0" width="13" height="11" fill="#a4a4a4"/><rect x="1" y="2" width="11" height="8" fill="#dedede"/><rect x="0" y="0" width="13" height="2" fill="#fff"/><rect x="3" y="0" width="10" height="2" fill="#2a92d2"/><rect x="0" y="0" width="1" height="2" fill="#3a7cc0"/><rect x="1" y="0.6" width="1.6" height="1.6" fill="#22dd22"/><rect x="2" y="3" width="5" height="1" fill="#b0b0b0"/><rect x="8" y="3" width="3" height="1" fill="#fff"/><rect x="2" y="5" width="1" height="1" fill="#a8a8a8"/><rect x="4" y="5" width="3" height="1" fill="#fff"/><rect x="8" y="5" width="3" height="1" fill="#fff"/><rect x="2" y="7" width="1" height="1" fill="#a8a8a8"/><rect x="4" y="7" width="3" height="1" fill="#fff"/><rect x="9" y="7" width="2" height="1" fill="#fff"/></svg>
<div class="t" style="left:984px;top:492px;color:#000">ВыборТипаРасчетаВалюты</div>
<div class="a" style="left:389px;top:524px;width:875px;height:1px;background:#8a8478"></div>
<div class="t" style="left:389px;top:509px;width:42px;text-align:right;color:#000">806</div>
<div class="a" style="left:445px;top:516px;width:10px;height:1px;background-image:linear-gradient(90deg,#000 50%,transparent 50%);background-size:2px 1px"></div>
<svg class="a" style="left:456px;top:509px" width="16" height="14" viewBox="0 0 16 14"><path d="M1.5 4V11.5M1.5 4.5H4Q5.5 4.5 5.5 6.5V7.5Q5.5 9.5 4 9.5H1.5M8.5 3.3Q7.4 4 7.4 6V8Q7.4 10 8.5 10.7M12.5 3.3Q13.6 4 13.6 6V8Q13.6 10 12.5 10.7" stroke="#e8301a" stroke-width="1.15" fill="none" stroke-linecap="round"/></svg>
<div class="t" style="left:474px;top:509px;color:#000">КоманднаяПанельТипыЦенДействие</div>
<svg class="a" style="left:965px;top:511px" width="13" height="11" viewBox="0 0 13 11"><rect x="0" y="0" width="13" height="11" fill="#a4a4a4"/><rect x="1" y="2" width="11" height="8" fill="#dedede"/><rect x="0" y="0" width="13" height="2" fill="#fff"/><rect x="3" y="0" width="10" height="2" fill="#2a92d2"/><rect x="0" y="0" width="1" height="2" fill="#3a7cc0"/><rect x="1" y="0.6" width="1.6" height="1.6" fill="#22dd22"/><rect x="2" y="3" width="5" height="1" fill="#b0b0b0"/><rect x="8" y="3" width="3" height="1" fill="#fff"/><rect x="2" y="5" width="1" height="1" fill="#a8a8a8"/><rect x="4" y="5" width="3" height="1" fill="#fff"/><rect x="8" y="5" width="3" height="1" fill="#fff"/><rect x="2" y="7" width="1" height="1" fill="#a8a8a8"/><rect x="4" y="7" width="3" height="1" fill="#fff"/><rect x="9" y="7" width="2" height="1" fill="#fff"/></svg>
<div class="t" style="left:984px;top:509px;color:#000">Действие</div>
<div class="a" style="left:389px;top:541px;width:875px;height:1px;background:#8a8478"></div>
<div class="t" style="left:389px;top:526px;width:42px;text-align:right;color:#000">212</div>
<div class="a" style="left:445px;top:532px;width:10px;height:1px;background-image:linear-gradient(90deg,#000 50%,transparent 50%);background-size:2px 1px"></div>
<svg class="a" style="left:456px;top:526px" width="16" height="14" viewBox="0 0 16 14"><path d="M1.5 4V11.5M1.5 4.5H4Q5.5 4.5 5.5 6.5V7.5Q5.5 9.5 4 9.5H1.5M8.5 3.3Q7.4 4 7.4 6V8Q7.4 10 8.5 10.7M12.5 3.3Q13.6 4 13.6 6V8Q13.6 10 12.5 10.7" stroke="#e8301a" stroke-width="1.15" fill="none" stroke-linecap="round"/></svg>
<div class="t" style="left:474px;top:526px;color:#000">ДействияФормыДействиеКатегории</div>
<svg class="a" style="left:965px;top:528px" width="13" height="11" viewBox="0 0 13 11"><rect x="0" y="0" width="13" height="11" fill="#a4a4a4"/><rect x="1" y="2" width="11" height="8" fill="#dedede"/><rect x="0" y="0" width="13" height="2" fill="#fff"/><rect x="3" y="0" width="10" height="2" fill="#2a92d2"/><rect x="0" y="0" width="1" height="2" fill="#3a7cc0"/><rect x="1" y="0.6" width="1.6" height="1.6" fill="#22dd22"/><rect x="2" y="3" width="5" height="1" fill="#b0b0b0"/><rect x="8" y="3" width="3" height="1" fill="#fff"/><rect x="2" y="5" width="1" height="1" fill="#a8a8a8"/><rect x="4" y="5" width="3" height="1" fill="#fff"/><rect x="8" y="5" width="3" height="1" fill="#fff"/><rect x="2" y="7" width="1" height="1" fill="#a8a8a8"/><rect x="4" y="7" width="3" height="1" fill="#fff"/><rect x="9" y="7" width="2" height="1" fill="#fff"/></svg>
<div class="t" style="left:984px;top:526px;color:#000">ДействиеКатегории</div>
<div class="a" style="left:389px;top:558px;width:875px;height:1px;background:#8a8478"></div>
<div class="t" style="left:389px;top:543px;width:42px;text-align:right;color:#000">194</div>
<div class="a" style="left:445px;top:550px;width:10px;height:1px;background-image:linear-gradient(90deg,#000 50%,transparent 50%);background-size:2px 1px"></div>
<svg class="a" style="left:456px;top:543px" width="16" height="14" viewBox="0 0 16 14"><path d="M1.5 4V11.5M1.5 4.5H4Q5.5 4.5 5.5 6.5V7.5Q5.5 9.5 4 9.5H1.5M8.5 3.3Q7.4 4 7.4 6V8Q7.4 10 8.5 10.7M12.5 3.3Q13.6 4 13.6 6V8Q13.6 10 12.5 10.7" stroke="#e8301a" stroke-width="1.15" fill="none" stroke-linecap="round"/></svg>
<div class="t" style="left:474px;top:543px;color:#000">ДействияФормыДействиеСвойства</div>
<svg class="a" style="left:965px;top:545px" width="13" height="11" viewBox="0 0 13 11"><rect x="0" y="0" width="13" height="11" fill="#a4a4a4"/><rect x="1" y="2" width="11" height="8" fill="#dedede"/><rect x="0" y="0" width="13" height="2" fill="#fff"/><rect x="3" y="0" width="10" height="2" fill="#2a92d2"/><rect x="0" y="0" width="1" height="2" fill="#3a7cc0"/><rect x="1" y="0.6" width="1.6" height="1.6" fill="#22dd22"/><rect x="2" y="3" width="5" height="1" fill="#b0b0b0"/><rect x="8" y="3" width="3" height="1" fill="#fff"/><rect x="2" y="5" width="1" height="1" fill="#a8a8a8"/><rect x="4" y="5" width="3" height="1" fill="#fff"/><rect x="8" y="5" width="3" height="1" fill="#fff"/><rect x="2" y="7" width="1" height="1" fill="#a8a8a8"/><rect x="4" y="7" width="3" height="1" fill="#fff"/><rect x="9" y="7" width="2" height="1" fill="#fff"/></svg>
<div class="t" style="left:984px;top:543px;color:#000">ДействиеСвойства</div>
<div class="a" style="left:389px;top:575px;width:875px;height:1px;background:#8a8478"></div>
<div class="t" style="left:389px;top:560px;width:42px;text-align:right;color:#000">874</div>
<div class="a" style="left:445px;top:566px;width:10px;height:1px;background-image:linear-gradient(90deg,#000 50%,transparent 50%);background-size:2px 1px"></div>
<svg class="a" style="left:456px;top:560px" width="16" height="14" viewBox="0 0 16 14"><path d="M1.5 4V11.5M1.5 4.5H4Q5.5 4.5 5.5 6.5V7.5Q5.5 9.5 4 9.5H1.5M8.5 3.3Q7.4 4 7.4 6V8Q7.4 10 8.5 10.7M12.5 3.3Q13.6 4 13.6 6V8Q13.6 10 12.5 10.7" stroke="#e8301a" stroke-width="1.15" fill="none" stroke-linecap="round"/></svg>
<div class="t" style="left:474px;top:560px;color:#000">ЗначениеОтбораСпискаНоменклатурыАвтоПодборТекста</div>
<svg class="a" style="left:965px;top:562px" width="13" height="11" viewBox="0 0 13 11"><rect x="0" y="0" width="13" height="11" fill="#a4a4a4"/><rect x="1" y="2" width="11" height="8" fill="#dedede"/><rect x="0" y="0" width="13" height="2" fill="#fff"/><rect x="3" y="0" width="10" height="2" fill="#2a92d2"/><rect x="0" y="0" width="1" height="2" fill="#3a7cc0"/><rect x="1" y="0.6" width="1.6" height="1.6" fill="#22dd22"/><rect x="2" y="3" width="5" height="1" fill="#b0b0b0"/><rect x="8" y="3" width="3" height="1" fill="#fff"/><rect x="2" y="5" width="1" height="1" fill="#a8a8a8"/><rect x="4" y="5" width="3" height="1" fill="#fff"/><rect x="8" y="5" width="3" height="1" fill="#fff"/><rect x="2" y="7" width="1" height="1" fill="#a8a8a8"/><rect x="4" y="7" width="3" height="1" fill="#fff"/><rect x="9" y="7" width="2" height="1" fill="#fff"/></svg>
<div class="t" style="left:984px;top:560px;color:#000">ЗначениеОтбораСпискаНоменклатуры</div>
<div class="a" style="left:389px;top:592px;width:875px;height:1px;background:#8a8478"></div>
<div class="t" style="left:389px;top:577px;width:42px;text-align:right;color:#000">866</div>
<div class="a" style="left:445px;top:584px;width:10px;height:1px;background-image:linear-gradient(90deg,#000 50%,transparent 50%);background-size:2px 1px"></div>
<svg class="a" style="left:456px;top:577px" width="16" height="14" viewBox="0 0 16 14"><path d="M1.5 4V11.5M1.5 4.5H4Q5.5 4.5 5.5 6.5V7.5Q5.5 9.5 4 9.5H1.5M8.5 3.3Q7.4 4 7.4 6V8Q7.4 10 8.5 10.7M12.5 3.3Q13.6 4 13.6 6V8Q13.6 10 12.5 10.7" stroke="#e8301a" stroke-width="1.15" fill="none" stroke-linecap="round"/></svg>
<div class="t" style="left:474px;top:577px;color:#000">ЗначениеОтбораСпискаНоменклатурыПриИзменении</div>
<svg class="a" style="left:965px;top:579px" width="13" height="11" viewBox="0 0 13 11"><rect x="0" y="0" width="13" height="11" fill="#a4a4a4"/><rect x="1" y="2" width="11" height="8" fill="#dedede"/><rect x="0" y="0" width="13" height="2" fill="#fff"/><rect x="3" y="0" width="10" height="2" fill="#2a92d2"/><rect x="0" y="0" width="1" height="2" fill="#3a7cc0"/><rect x="1" y="0.6" width="1.6" height="1.6" fill="#22dd22"/><rect x="2" y="3" width="5" height="1" fill="#b0b0b0"/><rect x="8" y="3" width="3" height="1" fill="#fff"/><rect x="2" y="5" width="1" height="1" fill="#a8a8a8"/><rect x="4" y="5" width="3" height="1" fill="#fff"/><rect x="8" y="5" width="3" height="1" fill="#fff"/><rect x="2" y="7" width="1" height="1" fill="#a8a8a8"/><rect x="4" y="7" width="3" height="1" fill="#fff"/><rect x="9" y="7" width="2" height="1" fill="#fff"/></svg>
<div class="t" style="left:984px;top:577px;color:#000">ЗначениеОтбораСпискаНоменклатуры</div>
<div class="a" style="left:389px;top:609px;width:875px;height:1px;background:#8a8478"></div>
<div class="t" style="left:389px;top:594px;width:42px;text-align:right;color:#000">393</div>
<div class="a" style="left:445px;top:600px;width:10px;height:1px;background-image:linear-gradient(90deg,#000 50%,transparent 50%);background-size:2px 1px"></div>
<svg class="a" style="left:456px;top:594px" width="16" height="14" viewBox="0 0 16 14"><path d="M1.5 4V11.5M1.5 4.5H4Q5.5 4.5 5.5 6.5V7.5Q5.5 9.5 4 9.5H1.5M8.5 3.3Q7.4 4 7.4 6V8Q7.4 10 8.5 10.7M12.5 3.3Q13.6 4 13.6 6V8Q13.6 10 12.5 10.7" stroke="#e8301a" stroke-width="1.15" fill="none" stroke-linecap="round"/></svg>
<div class="t" style="left:474px;top:594px;color:#000">ДействияФормыИзображение</div>
<svg class="a" style="left:965px;top:596px" width="13" height="11" viewBox="0 0 13 11"><rect x="0" y="0" width="13" height="11" fill="#a4a4a4"/><rect x="1" y="2" width="11" height="8" fill="#dedede"/><rect x="0" y="0" width="13" height="2" fill="#fff"/><rect x="3" y="0" width="10" height="2" fill="#2a92d2"/><rect x="0" y="0" width="1" height="2" fill="#3a7cc0"/><rect x="1" y="0.6" width="1.6" height="1.6" fill="#22dd22"/><rect x="2" y="3" width="5" height="1" fill="#b0b0b0"/><rect x="8" y="3" width="3" height="1" fill="#fff"/><rect x="2" y="5" width="1" height="1" fill="#a8a8a8"/><rect x="4" y="5" width="3" height="1" fill="#fff"/><rect x="8" y="5" width="3" height="1" fill="#fff"/><rect x="2" y="7" width="1" height="1" fill="#a8a8a8"/><rect x="4" y="7" width="3" height="1" fill="#fff"/><rect x="9" y="7" width="2" height="1" fill="#fff"/></svg>
<div class="t" style="left:984px;top:594px;color:#000">Изображение</div>
<div class="a" style="left:389px;top:626px;width:875px;height:1px;background:#8a8478"></div>
<div class="t" style="left:389px;top:611px;width:42px;text-align:right;color:#000">296</div>
<div class="a" style="left:445px;top:618px;width:10px;height:1px;background-image:linear-gradient(90deg,#000 50%,transparent 50%);background-size:2px 1px"></div>
<svg class="a" style="left:456px;top:611px" width="16" height="14" viewBox="0 0 16 14"><path d="M1.5 4V11.5M1.5 4.5H4Q5.5 4.5 5.5 6.5V7.5Q5.5 9.5 4 9.5H1.5M8.5 3.3Q7.4 4 7.4 6V8Q7.4 10 8.5 10.7M12.5 3.3Q13.6 4 13.6 6V8Q13.6 10 12.5 10.7" stroke="#e8301a" stroke-width="1.15" fill="none" stroke-linecap="round"/></svg>
<div class="t" style="left:474px;top:611px;color:#000">ДействияФормыКомплектующие</div>
<svg class="a" style="left:965px;top:613px" width="13" height="11" viewBox="0 0 13 11"><rect x="0" y="0" width="13" height="11" fill="#a4a4a4"/><rect x="1" y="2" width="11" height="8" fill="#dedede"/><rect x="0" y="0" width="13" height="2" fill="#fff"/><rect x="3" y="0" width="10" height="2" fill="#2a92d2"/><rect x="0" y="0" width="1" height="2" fill="#3a7cc0"/><rect x="1" y="0.6" width="1.6" height="1.6" fill="#22dd22"/><rect x="2" y="3" width="5" height="1" fill="#b0b0b0"/><rect x="8" y="3" width="3" height="1" fill="#fff"/><rect x="2" y="5" width="1" height="1" fill="#a8a8a8"/><rect x="4" y="5" width="3" height="1" fill="#fff"/><rect x="8" y="5" width="3" height="1" fill="#fff"/><rect x="2" y="7" width="1" height="1" fill="#a8a8a8"/><rect x="4" y="7" width="3" height="1" fill="#fff"/><rect x="9" y="7" width="2" height="1" fill="#fff"/></svg>
<div class="t" style="left:984px;top:611px;color:#000">Комплектующие</div>
<div class="a" style="left:389px;top:643px;width:875px;height:1px;background:#8a8478"></div>
<div class="t" style="left:389px;top:628px;width:42px;text-align:right;color:#000">822</div>
<div class="a" style="left:445px;top:634px;width:10px;height:1px;background-image:linear-gradient(90deg,#000 50%,transparent 50%);background-size:2px 1px"></div>
<svg class="a" style="left:456px;top:628px" width="16" height="14" viewBox="0 0 16 14"><path d="M1.5 4V11.5M1.5 4.5H4Q5.5 4.5 5.5 6.5V7.5Q5.5 9.5 4 9.5H1.5M8.5 3.3Q7.4 4 7.4 6V8Q7.4 10 8.5 10.7M12.5 3.3Q13.6 4 13.6 6V8Q13.6 10 12.5 10.7" stroke="#e8301a" stroke-width="1.15" fill="none" stroke-linecap="round"/></svg>
<div class="t" style="left:474px;top:628px;color:#000">КоманднаяПанельТипыЦенОбновить</div>
<svg class="a" style="left:965px;top:630px" width="13" height="11" viewBox="0 0 13 11"><rect x="0" y="0" width="13" height="11" fill="#a4a4a4"/><rect x="1" y="2" width="11" height="8" fill="#dedede"/><rect x="0" y="0" width="13" height="2" fill="#fff"/><rect x="3" y="0" width="10" height="2" fill="#2a92d2"/><rect x="0" y="0" width="1" height="2" fill="#3a7cc0"/><rect x="1" y="0.6" width="1.6" height="1.6" fill="#22dd22"/><rect x="2" y="3" width="5" height="1" fill="#b0b0b0"/><rect x="8" y="3" width="3" height="1" fill="#fff"/><rect x="2" y="5" width="1" height="1" fill="#a8a8a8"/><rect x="4" y="5" width="3" height="1" fill="#fff"/><rect x="8" y="5" width="3" height="1" fill="#fff"/><rect x="2" y="7" width="1" height="1" fill="#a8a8a8"/><rect x="4" y="7" width="3" height="1" fill="#fff"/><rect x="9" y="7" width="2" height="1" fill="#fff"/></svg>
<div class="t" style="left:984px;top:628px;color:#000">Обновить</div>
<div class="a" style="left:389px;top:660px;width:875px;height:1px;background:#8a8478"></div>
<div class="t" style="left:389px;top:645px;width:42px;text-align:right;color:#000">533</div>
<div class="a" style="left:445px;top:652px;width:10px;height:1px;background-image:linear-gradient(90deg,#000 50%,transparent 50%);background-size:2px 1px"></div>
<svg class="a" style="left:456px;top:645px" width="16" height="14" viewBox="0 0 16 14"><path d="M1.5 4V11.5M1.5 4.5H4Q5.5 4.5 5.5 6.5V7.5Q5.5 9.5 4 9.5H1.5M8.5 3.3Q7.4 4 7.4 6V8Q7.4 10 8.5 10.7M12.5 3.3Q13.6 4 13.6 6V8Q13.6 10 12.5 10.7" stroke="#e8301a" stroke-width="1.15" fill="none" stroke-linecap="round"/></svg>
<div class="t" style="left:474px;top:645px;color:#000">ОсновноеИзображениеНажатие</div>
<svg class="a" style="left:965px;top:647px" width="13" height="11" viewBox="0 0 13 11"><rect x="0" y="0" width="13" height="11" fill="#a4a4a4"/><rect x="1" y="2" width="11" height="8" fill="#dedede"/><rect x="0" y="0" width="13" height="2" fill="#fff"/><rect x="3" y="0" width="10" height="2" fill="#2a92d2"/><rect x="0" y="0" width="1" height="2" fill="#3a7cc0"/><rect x="1" y="0.6" width="1.6" height="1.6" fill="#22dd22"/><rect x="2" y="3" width="5" height="1" fill="#b0b0b0"/><rect x="8" y="3" width="3" height="1" fill="#fff"/><rect x="2" y="5" width="1" height="1" fill="#a8a8a8"/><rect x="4" y="5" width="3" height="1" fill="#fff"/><rect x="8" y="5" width="3" height="1" fill="#fff"/><rect x="2" y="7" width="1" height="1" fill="#a8a8a8"/><rect x="4" y="7" width="3" height="1" fill="#fff"/><rect x="9" y="7" width="2" height="1" fill="#fff"/></svg>
<div class="t" style="left:984px;top:645px;color:#000">ОсновноеИзображение</div>
<div class="a" style="left:389px;top:677px;width:875px;height:1px;background:#8a8478"></div>
<div class="t" style="left:389px;top:662px;width:42px;text-align:right;color:#000">127</div>
<div class="a" style="left:445px;top:668px;width:10px;height:1px;background-image:linear-gradient(90deg,#000 50%,transparent 50%);background-size:2px 1px"></div>
<svg class="a" style="left:456px;top:662px" width="16" height="14" viewBox="0 0 16 14"><path d="M1.5 4V11.5M1.5 4.5H4Q5.5 4.5 5.5 6.5V7.5Q5.5 9.5 4 9.5H1.5M8.5 3.3Q7.4 4 7.4 6V8Q7.4 10 8.5 10.7M12.5 3.3Q13.6 4 13.6 6V8Q13.6 10 12.5 10.7" stroke="#e8301a" stroke-width="1.15" fill="none" stroke-linecap="round"/></svg>
<div class="t" style="left:474px;top:662px;color:#000">ДействияФормыОстаткиТоваровНаСкладах</div>
<svg class="a" style="left:965px;top:664px" width="13" height="11" viewBox="0 0 13 11"><rect x="0" y="0" width="13" height="11" fill="#a4a4a4"/><rect x="1" y="2" width="11" height="8" fill="#dedede"/><rect x="0" y="0" width="13" height="2" fill="#fff"/><rect x="3" y="0" width="10" height="2" fill="#2a92d2"/><rect x="0" y="0" width="1" height="2" fill="#3a7cc0"/><rect x="1" y="0.6" width="1.6" height="1.6" fill="#22dd22"/><rect x="2" y="3" width="5" height="1" fill="#b0b0b0"/><rect x="8" y="3" width="3" height="1" fill="#fff"/><rect x="2" y="5" width="1" height="1" fill="#a8a8a8"/><rect x="4" y="5" width="3" height="1" fill="#fff"/><rect x="8" y="5" width="3" height="1" fill="#fff"/><rect x="2" y="7" width="1" height="1" fill="#a8a8a8"/><rect x="4" y="7" width="3" height="1" fill="#fff"/><rect x="9" y="7" width="2" height="1" fill="#fff"/></svg>
<div class="t" style="left:984px;top:662px;color:#000">ОстаткиТоваровНаСкладах</div>
<div class="a" style="left:389px;top:694px;width:875px;height:1px;background:#8a8478"></div>
<div class="t" style="left:389px;top:679px;width:42px;text-align:right;color:#000">230</div>
<div class="a" style="left:445px;top:686px;width:10px;height:1px;background-image:linear-gradient(90deg,#000 50%,transparent 50%);background-size:2px 1px"></div>
<svg class="a" style="left:456px;top:679px" width="16" height="14" viewBox="0 0 16 14"><path d="M1.5 4V11.5M1.5 4.5H4Q5.5 4.5 5.5 6.5V7.5Q5.5 9.5 4 9.5H1.5M8.5 3.3Q7.4 4 7.4 6V8Q7.4 10 8.5 10.7M12.5 3.3Q13.6 4 13.6 6V8Q13.6 10 12.5 10.7" stroke="#e8301a" stroke-width="1.15" fill="none" stroke-linecap="round"/></svg>
<div class="t" style="left:474px;top:679px;color:#000">ДействияФормыОткрытьПрайсЛист</div>
<svg class="a" style="left:965px;top:681px" width="13" height="11" viewBox="0 0 13 11"><rect x="0" y="0" width="13" height="11" fill="#a4a4a4"/><rect x="1" y="2" width="11" height="8" fill="#dedede"/><rect x="0" y="0" width="13" height="2" fill="#fff"/><rect x="3" y="0" width="10" height="2" fill="#2a92d2"/><rect x="0" y="0" width="1" height="2" fill="#3a7cc0"/><rect x="1" y="0.6" width="1.6" height="1.6" fill="#22dd22"/><rect x="2" y="3" width="5" height="1" fill="#b0b0b0"/><rect x="8" y="3" width="3" height="1" fill="#fff"/><rect x="2" y="5" width="1" height="1" fill="#a8a8a8"/><rect x="4" y="5" width="3" height="1" fill="#fff"/><rect x="8" y="5" width="3" height="1" fill="#fff"/><rect x="2" y="7" width="1" height="1" fill="#a8a8a8"/><rect x="4" y="7" width="3" height="1" fill="#fff"/><rect x="9" y="7" width="2" height="1" fill="#fff"/></svg>
<div class="t" style="left:984px;top:679px;color:#000">ОткрытьПрайсЛист</div>
<div class="a" style="left:389px;top:711px;width:875px;height:1px;background:#8a8478"></div>
<div class="t" style="left:389px;top:696px;width:42px;text-align:right;color:#000">814</div>
<div class="a" style="left:445px;top:702px;width:10px;height:1px;background-image:linear-gradient(90deg,#000 50%,transparent 50%);background-size:2px 1px"></div>
<svg class="a" style="left:456px;top:696px" width="16" height="14" viewBox="0 0 16 14"><path d="M1.5 4V11.5M1.5 4.5H4Q5.5 4.5 5.5 6.5V7.5Q5.5 9.5 4 9.5H1.5M8.5 3.3Q7.4 4 7.4 6V8Q7.4 10 8.5 10.7M12.5 3.3Q13.6 4 13.6 6V8Q13.6 10 12.5 10.7" stroke="#e8301a" stroke-width="1.15" fill="none" stroke-linecap="round"/></svg>
<div class="t" style="left:474px;top:696px;color:#000">КоманднаяПанельТипыЦенОтменитьВсе</div>
<svg class="a" style="left:965px;top:698px" width="13" height="11" viewBox="0 0 13 11"><rect x="0" y="0" width="13" height="11" fill="#a4a4a4"/><rect x="1" y="2" width="11" height="8" fill="#dedede"/><rect x="0" y="0" width="13" height="2" fill="#fff"/><rect x="3" y="0" width="10" height="2" fill="#2a92d2"/><rect x="0" y="0" width="1" height="2" fill="#3a7cc0"/><rect x="1" y="0.6" width="1.6" height="1.6" fill="#22dd22"/><rect x="2" y="3" width="5" height="1" fill="#b0b0b0"/><rect x="8" y="3" width="3" height="1" fill="#fff"/><rect x="2" y="5" width="1" height="1" fill="#a8a8a8"/><rect x="4" y="5" width="3" height="1" fill="#fff"/><rect x="8" y="5" width="3" height="1" fill="#fff"/><rect x="2" y="7" width="1" height="1" fill="#a8a8a8"/><rect x="4" y="7" width="3" height="1" fill="#fff"/><rect x="9" y="7" width="2" height="1" fill="#fff"/></svg>
<div class="t" style="left:984px;top:696px;color:#000">ОтменитьВсе</div>
<div class="a" style="left:389px;top:728px;width:875px;height:1px;background:#8a8478"></div>
<div class="t" style="left:389px;top:713px;width:42px;text-align:right;color:#000">829</div>
<div class="a" style="left:445px;top:720px;width:10px;height:1px;background-image:linear-gradient(90deg,#000 50%,transparent 50%);background-size:2px 1px"></div>
<svg class="a" style="left:456px;top:713px" width="16" height="14" viewBox="0 0 16 14"><path d="M1.5 4V11.5M1.5 4.5H4Q5.5 4.5 5.5 6.5V7.5Q5.5 9.5 4 9.5H1.5M8.5 3.3Q7.4 4 7.4 6V8Q7.4 10 8.5 10.7M12.5 3.3Q13.6 4 13.6 6V8Q13.6 10 12.5 10.7" stroke="#e8301a" stroke-width="1.15" fill="none" stroke-linecap="round"/></svg>
<div class="t" style="left:474px;top:713px;color:#000">КоманднаяПанельТипыЦенПереместитьВверх</div>
<svg class="a" style="left:965px;top:715px" width="13" height="11" viewBox="0 0 13 11"><rect x="0" y="0" width="13" height="11" fill="#a4a4a4"/><rect x="1" y="2" width="11" height="8" fill="#dedede"/><rect x="0" y="0" width="13" height="2" fill="#fff"/><rect x="3" y="0" width="10" height="2" fill="#2a92d2"/><rect x="0" y="0" width="1" height="2" fill="#3a7cc0"/><rect x="1" y="0.6" width="1.6" height="1.6" fill="#22dd22"/><rect x="2" y="3" width="5" height="1" fill="#b0b0b0"/><rect x="8" y="3" width="3" height="1" fill="#fff"/><rect x="2" y="5" width="1" height="1" fill="#a8a8a8"/><rect x="4" y="5" width="3" height="1" fill="#fff"/><rect x="8" y="5" width="3" height="1" fill="#fff"/><rect x="2" y="7" width="1" height="1" fill="#a8a8a8"/><rect x="4" y="7" width="3" height="1" fill="#fff"/><rect x="9" y="7" width="2" height="1" fill="#fff"/></svg>
<div class="t" style="left:984px;top:713px;color:#000">ПереместитьВверх</div>
<div class="t" style="left:389px;top:730px;width:42px;text-align:right;color:#000">836</div>
<div class="a" style="left:445px;top:736px;width:10px;height:1px;background-image:linear-gradient(90deg,#000 50%,transparent 50%);background-size:2px 1px"></div>
<svg class="a" style="left:456px;top:730px" width="16" height="14" viewBox="0 0 16 14"><path d="M1.5 4V11.5M1.5 4.5H4Q5.5 4.5 5.5 6.5V7.5Q5.5 9.5 4 9.5H1.5M8.5 3.3Q7.4 4 7.4 6V8Q7.4 10 8.5 10.7M12.5 3.3Q13.6 4 13.6 6V8Q13.6 10 12.5 10.7" stroke="#e8301a" stroke-width="1.15" fill="none" stroke-linecap="round"/></svg>
<div class="t" style="left:474px;top:730px;color:#000">КоманднаяПанельТипыЦенПереместитьВниз</div>
<svg class="a" style="left:965px;top:732px" width="13" height="11" viewBox="0 0 13 11"><rect x="0" y="0" width="13" height="11" fill="#a4a4a4"/><rect x="1" y="2" width="11" height="8" fill="#dedede"/><rect x="0" y="0" width="13" height="2" fill="#fff"/><rect x="3" y="0" width="10" height="2" fill="#2a92d2"/><rect x="0" y="0" width="1" height="2" fill="#3a7cc0"/><rect x="1" y="0.6" width="1.6" height="1.6" fill="#22dd22"/><rect x="2" y="3" width="5" height="1" fill="#b0b0b0"/><rect x="8" y="3" width="3" height="1" fill="#fff"/><rect x="2" y="5" width="1" height="1" fill="#a8a8a8"/><rect x="4" y="5" width="3" height="1" fill="#fff"/><rect x="8" y="5" width="3" height="1" fill="#fff"/><rect x="2" y="7" width="1" height="1" fill="#a8a8a8"/><rect x="4" y="7" width="3" height="1" fill="#fff"/><rect x="9" y="7" width="2" height="1" fill="#fff"/></svg>
<div class="t" style="left:984px;top:730px;color:#000">ПереместитьВниз</div>
<div class="a" style="left:445px;top:176px;width:1px;height:569px;background-image:linear-gradient(180deg,#000 50%,transparent 50%);background-size:1px 2px"></div>
<div class="a" style="left:389px;top:355px;width:875px;height:17px;border:1px dotted #e8e070;z-index:3"></div>
<div class="a" style="left:1264px;top:153px;width:1px;height:591px;background:#f4f0e6"></div>
<div class="a" style="left:1265px;top:153px;width:13px;height:591px;background:#fdf8ec"></div>
<div class="a" style="left:1266px;top:154px;width:11px;height:11px;background:#e2ddd2;border:1px solid #cdc6b8"></div>
<svg class="a" style="left:1267px;top:156px" width="9" height="6" viewBox="0 0 9 6"><path d="M1 5L4.5 1.5L8 5" stroke="#000" stroke-width="1.2" fill="none"/></svg>
<div class="a" style="left:1266px;top:166px;width:11px;height:331px;background:#ddd7cc;border:1px solid #cdc6b8"></div>
<div class="a" style="left:1266px;top:732px;width:11px;height:11px;background:#e2ddd2;border:1px solid #cdc6b8"></div>
<svg class="a" style="left:1267px;top:735px" width="9" height="6" viewBox="0 0 9 6"><path d="M1 1L4.5 4.5L8 1" stroke="#000" stroke-width="1.2" fill="none"/></svg>
</body></html>
